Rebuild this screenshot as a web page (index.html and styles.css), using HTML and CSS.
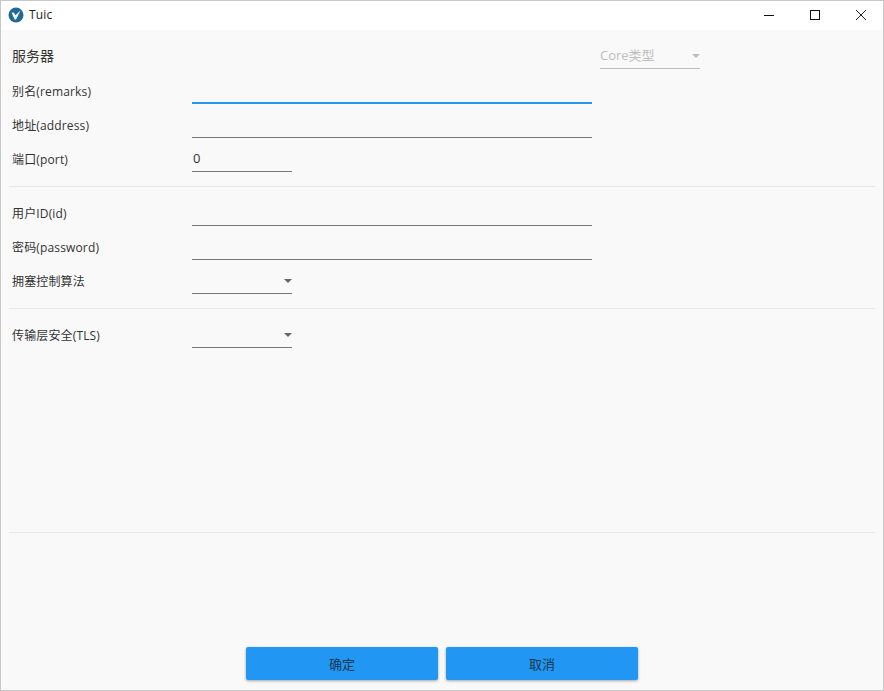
FILE: index.html
```html
<!DOCTYPE html>
<html lang="zh">
<head>
<meta charset="utf-8">
<title>Tuic</title>
<link rel="stylesheet" href="styles.css">
</head>
<body>
<div class="window">
  <header class="titlebar">
    <svg class="logo" width="16" height="16" viewBox="0 0 16 16"><circle cx="8" cy="8" r="7.5" fill="#1f6a96"/><path d="M3.6 5.8 L5.8 5.4 L7.4 8.2 L12.6 3.4 L8 12.4 L6.6 12.4 Z" fill="#fff"/></svg>
    <span class="title">Tuic</span>
    <div class="controls">
      <svg class="ctl" width="12" height="12" viewBox="0 0 12 12"><path d="M1 6.5H11" stroke="#111" fill="none"/></svg>
      <svg class="ctl" width="12" height="12" viewBox="0 0 12 12"><rect x="1.5" y="1.5" width="9" height="9" stroke="#111" fill="none"/></svg>
      <svg class="ctl" width="12" height="12" viewBox="0 0 12 12"><path d="M1 1L11 11M11 1L1 11" stroke="#222" fill="none"/></svg>
    </div>
  </header>
  <main class="content">
    <section class="group first">
      <div class="head">
        <span class="heading">服务器</span>
        <div class="select core"><span class="value">Core类型</span><i class="caret"></i></div>
      </div>
      <div class="row"><label class="label">别名(remarks)</label><div class="field wide focus"></div></div>
      <div class="row"><label class="label">地址(address)</label><div class="field wide"></div></div>
      <div class="row"><label class="label">端口(port)</label><div class="field narrow"><span class="value">0</span></div></div>
    </section>
    <section class="group">
      <div class="row"><label class="label">用户ID(id)</label><div class="field wide"></div></div>
      <div class="row"><label class="label">密码(password)</label><div class="field wide"></div></div>
      <div class="row"><label class="label">拥塞控制算法</label><div class="field narrow select"><i class="caret"></i></div></div>
    </section>
    <section class="group tls">
      <div class="row"><label class="label">传输层安全(TLS)</label><div class="field narrow select"><i class="caret"></i></div></div>
    </section>
    <footer class="actions">
      <button class="btn">确定</button>
      <button class="btn">取消</button>
    </footer>
  </main>
</div>
</body>
</html>
```
FILE: styles.css
```css
* { box-sizing: border-box; }
html, body { margin: 0; padding: 0; }
body {
  width: 884px;
  height: 691px;
  overflow: hidden;
  font-family: "Open Sans", "Noto Sans CJK SC", sans-serif;
  color: #333;
}
.window {
  width: 884px;
  height: 691px;
  display: flex;
  flex-direction: column;
  border: 1px solid #c8c8c8;
  background: #f9f9f9;
}
.titlebar {
  height: 29px;
  flex: none;
  display: flex;
  align-items: center;
  padding: 0 0 2px 7px;
  background: #fff;
  color: #222;
}
.logo { flex: none; }
.title { margin-left: 5px; font-size: 12px; letter-spacing: 0.2px; }
.controls { margin-left: auto; display: flex; gap: 34px; padding-right: 16px; }
.ctl { display: block; }
.content { flex: 1; display: flex; flex-direction: column; padding: 0 8px; }
.group { padding: 5px 3px 14px; border-bottom: 1px solid #e6e6e6; }
.group.first { padding-top: 9px; }
.group.tls { height: 224px; }
.head { display: flex; justify-content: space-between; align-items: flex-start; height: 31px; width: 688px; }
.heading { font-size: 14px; line-height: 34px; }
.row { display: flex; height: 34px; }
.label { width: 180px; padding-top: 8px; font-size: 12px; line-height: 28px; letter-spacing: 0.15px; }
.field { height: 34px; border-bottom: 1px solid #777; position: relative; }
.wide { width: 400px; }
.narrow { width: 100px; }
.focus { border-bottom: 2px solid #2196f3; }
.value { font-size: 13px; }
.field .value { display: block; padding: 7px 0 0 1px; line-height: 26px; color: #333; }
.select { position: relative; }
.core { width: 100px; height: 30px; border-bottom: 1px solid #bdbdbd; color: #bdbdbd; }
.core .value { line-height: 33px; display: block; }
.caret {
  position: absolute;
  right: 0;
  top: 19px;
  width: 0;
  height: 0;
  border-left: 4px solid transparent;
  border-right: 4px solid transparent;
  border-top: 4px solid #666;
}
.core .caret { top: 15px; border-top-color: #bdbdbd; }
.actions { margin-top: auto; display: flex; justify-content: center; gap: 8px; padding: 0 0 10px; margin-left: -1px; }
.btn {
  width: 192px;
  height: 33px;
  padding: 0 0 0 1px;
  border: 0;
  border-radius: 2px;
  background: #2196f3;
  color: #17364f;
  font: inherit;
  font-size: 13px;
  box-shadow: 0 1px 3px rgba(0,0,0,.35);
}
```
